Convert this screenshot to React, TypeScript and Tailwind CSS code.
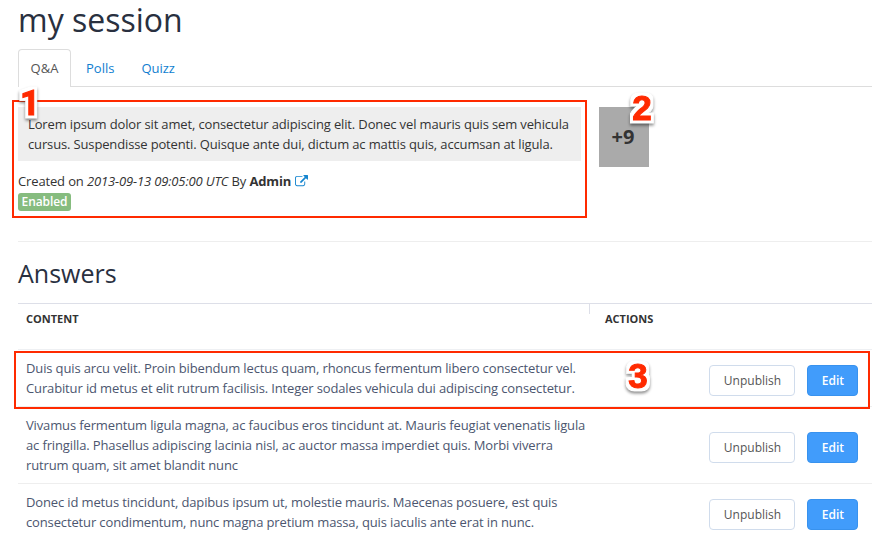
import React from "react";

const answers: string[][] = [
  [
    "Duis quis arcu velit. Proin bibendum lectus quam, rhoncus fermentum libero consectetur vel.",
    "Curabitur id metus et elit rutrum facilisis. Integer sodales vehicula dui adipiscing consectetur.",
  ],
  [
    "Vivamus fermentum ligula magna, ac faucibus eros tincidunt at. Mauris feugiat venenatis ligula",
    "ac fringilla. Phasellus adipiscing lacinia nisl, ac auctor massa imperdiet quis. Morbi viverra",
    "rutrum quam, sit amet blandit nunc",
  ],
  [
    "Donec id metus tincidunt, dapibus ipsum ut, molestie mauris. Maecenas posuere, est quis",
    "consectetur condimentum, nunc magna pretium massa, quis iaculis ante erat in nunc.",
  ],
];

function ExternalLink() {
  return (
    <svg viewBox="0 0 1792 1792" className="ml-[4px] inline-block h-[13px] w-[13px] align-[-2px] fill-[#1585cf]">
      <path d="M1408 928v320q0 119-84.5 203.5t-203.5 84.5h-832q-119 0-203.5-84.5t-84.5-203.5v-832q0-119 84.5-203.5t203.5-84.5h704q14 0 23 9t9 23v64q0 14-9 23t-23 9h-704q-66 0-113 47t-47 113v832q0 66 47 113t113 47h832q66 0 113-47t47-113v-320q0-14 9-23t23-9h64q14 0 23 9t9 23zm384-864v512q0 26-19 45t-45 19-45-19l-176-176-652 652q-10 10-23 10t-23-10l-114-114q-10-10-10-23t10-23l652-652-176-176q-19-19-19-45t19-45 45-19h512q26 0 45 19t19 45z" />
    </svg>
  );
}

// Numbered callout marker, laid over the content it refers to
function Marker({ n, className, font }: { n: string; className: string; font: string }) {
  return (
    <svg width="40" height="48" viewBox="0 0 40 48" className={"absolute z-10 overflow-visible drop-shadow-[0_2px_1.5px_rgba(0,0,0,0.45)] " + className}>
      <filter id={"outline" + n} x="-50%" y="-50%" width="200%" height="200%" colorInterpolationFilters="sRGB">
        <feMorphology in="SourceAlpha" operator="dilate" radius="3" result="wide" />
        <feFlood floodColor="#fff" />
        <feComposite in2="wide" operator="in" />
        <feMerge>
          <feMergeNode />
          <feMergeNode in="SourceGraphic" />
        </feMerge>
      </filter>
      <text
        x="20"
        y="35.5"
        textAnchor="middle"
        filter={"url(#outline" + n + ")"}
        className={"fill-[#ff2a00] stroke-[#ff2a00] stroke-[1px] text-[35px] font-bold " + font}
      >
        {n}
      </text>
    </svg>
  );
}

export default function App() {
  return (
    <div className="h-[549px] w-[876px] overflow-hidden bg-white pl-[18px] pr-1 font-['Open_Sans','Noto_Sans',sans-serif] text-[13px] leading-5 text-[#333]">
      <h1 className="h-[49px] text-[32px] leading-[40px] text-[#29303f]">my session</h1>

      <nav className="flex h-[38px] border-b border-[#ddd]">
        <a className="h-[38px] w-[53px] rounded-t border border-b-0 border-[#ddd] bg-white pt-[8px] text-center text-[#555]">Q&amp;A</a>
        <a className="ml-[15px] pt-[9px] text-[#0f7ed0]">Polls</a>
        <a className="ml-[27px] pt-[9px] text-[#0f7ed0]">Quizz</a>
      </nav>

      <div className="flex h-[155px] border-b border-[#eee] pt-5">
        <section className="relative w-[563px]">
          <div className="pointer-events-none absolute -left-[6px] -top-[7px] h-[118px] w-[575px] border-2 border-[#ff2a00]" />
          <Marker n="1" font="font-['Roboto',sans-serif]" className="-left-[8px] -top-[28px]" />
          <div className="whitespace-nowrap bg-[#eee] px-[10px] py-[7px] tracking-[-0.143px]">
            <p>Lorem ipsum dolor sit amet, consectetur adipiscing elit. Donec vel mauris quis sem vehicula</p>
            <p>cursus. Suspendisse potenti. Quisque ante dui, dictum ac mattis quis, accumsan at ligula.</p>
          </div>
          <p className="mt-[10px] tracking-[-0.14px]">
            Created on <em>2013-09-13 09:05:00 UTC</em> By <b>Admin</b>
            <ExternalLink />
          </p>
          <span className="mt-[2px] block h-[18px] w-[53px] rounded-[3px] bg-[#86bc7f] text-center text-[12px] font-semibold leading-[17px] tracking-[-0.1px] text-white">
            Enabled
          </span>
        </section>
        <div className="relative ml-[18px] flex h-[60px] w-[50px] items-center justify-center bg-[#aaa] pr-[2px] text-[20px] font-bold">
          +9
          <Marker n="2" font="font-['Liberation_Sans',sans-serif]" className="left-[23px] -top-[23px]" />
        </div>
      </div>

      <h2 className="h-[61px] pt-[15px] text-[25px] leading-[32px] text-[#29303f]">Answers</h2>

      <div className="flex h-[47px] border-b border-t border-b-[#eef0f3] border-t-[#dddfe8] text-[11px] font-bold uppercase">
        <div className="w-[571px] pl-2 pt-[5px]">Content</div>
        <div className="h-[10px] w-px bg-[#dddfe8]" />
        <div className="pl-[15px] pt-[5px]">Actions</div>
      </div>

      {answers.map((lines, i) => (
        <div key={i} className="relative flex items-center border-b border-[#eee] py-2 pl-2 pr-[14px] last:border-b-0">
          <div className="flex-1 whitespace-nowrap tracking-[-0.135px] text-[#4c566f]">
            {lines.map((line) => (
              <p key={line}>{line}</p>
            ))}
          </div>
          <div className="flex gap-3 pt-[5px] text-[12px]">
            <button className="h-[31px] w-[86px] rounded border border-[#d0dcec] bg-white pl-px text-[#555]">Unpublish</button>
            <button className="h-[31px] w-[51px] rounded border border-[#3892ee] bg-[#419cfb] pl-px font-semibold text-white">Edit</button>
          </div>
          {i === 0 && (
            <>
              <div className="pointer-events-none absolute -left-1 top-[1px] h-[58px] w-[856px] border-2 border-[#ff2a00]" />
              <Marker n="3" font="font-['Liberation_Sans',sans-serif]" className="left-[600px] top-[2px]" />
            </>
          )}
        </div>
      ))}
    </div>
  );
}
